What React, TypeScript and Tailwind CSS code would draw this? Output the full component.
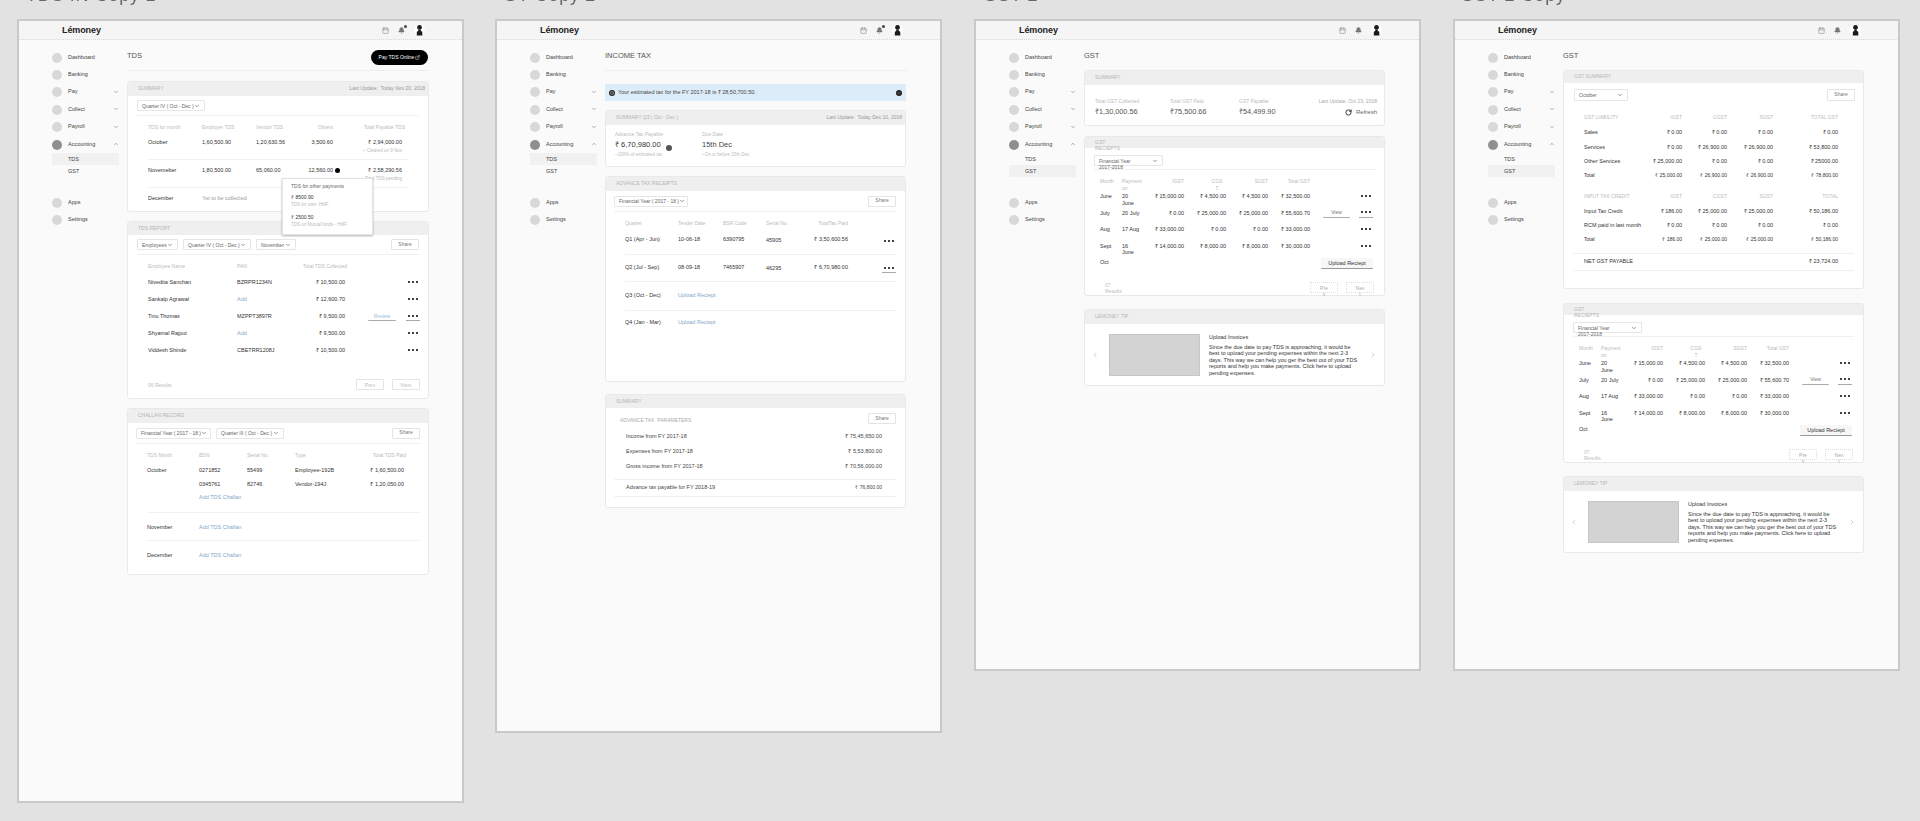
import type { ReactNode } from 'react';
import { Calendar, Bell, ChevronDown, ChevronUp, ChevronLeft, ChevronRight, ExternalLink, RotateCw, Check, Info } from 'lucide-react';

const navItems = [
  { label: 'Dashboard' },
  { label: 'Banking' },
  { label: 'Pay', caret: 'down' },
  { label: 'Collect', caret: 'down' },
  { label: 'Payroll', caret: 'down' },
  { label: 'Accounting', caret: 'up', active: true },
];

function Avatar() {
  return (
    <svg width="11" height="12" viewBox="0 0 11 12">
      <circle cx="5.5" cy="6" r="5.5" fill="#fff" />
      <circle cx="5.5" cy="3.4" r="2.4" fill="#1a1a1a" />
      <path d="M4.4 5.5h2.2l.3 1.6 1.4.7v3.7H2.8V7.8l1.4-.7z" fill="#1a1a1a" />
    </svg>
  );
}

function Dots() {
  return (
    <span className="inline-flex items-center justify-center gap-[1.6px] w-[12px]">
      <span className="w-[2px] h-[2px] rounded-full bg-black" />
      <span className="w-[2px] h-[2px] rounded-full bg-black" />
      <span className="w-[2px] h-[2px] rounded-full bg-black" />
    </span>
  );
}

function Select({ label, className = '' }: { label: string; className?: string }) {
  return (
    <div className={`h-[11px] flex items-center justify-between px-[4px] bg-white border border-[#e6e6e6] rounded-[1px] text-[5px] leading-[6px] text-[#666] whitespace-nowrap ${className}`}>
      <span>{label}</span>
      <ChevronDown size={6} strokeWidth={2} className="text-[#333] shrink-0" />
    </div>
  );
}

function SmallButton({ label, className = '' }: { label: string; className?: string }) {
  return (
    <div className={`h-[11px] w-[28px] flex items-center justify-center bg-white border border-[#e4e4e4] rounded-[1px] text-[5px] text-[#777] ${className}`}>
      {label}
    </div>
  );
}

// pager buttons of the GST table: the label is too wide for its slot and wraps out of the box
function PagerButton({ label, className = '' }: { label: string; className?: string }) {
  return (
    <div className={`h-[11px] w-[28px] flex justify-center pt-[2px] bg-white border border-dotted border-[#dddddd] rounded-[1px] text-[5px] leading-[6.5px] text-[#aaa] ${className}`}>
      <span className="w-[9px] break-all text-center">{label}</span>
    </div>
  );
}

function Card({ title, right, titleClass = '', headerClass = 'h-[14px]', className = '', children }: {
  title: ReactNode;
  right?: ReactNode;
  titleClass?: string;
  headerClass?: string;
  className?: string;
  children: ReactNode;
}) {
  return (
    <section className={`relative bg-white border border-[#e9e9e9] rounded-[3px] ${className}`}>
      <div className={`flex items-center justify-between bg-[#efefef] pl-[10px] pr-[3px] rounded-t-[3px] text-[5px] leading-[5.5px] text-[#b5b5b5] ${headerClass}`}>
        <span className={titleClass}>{title}</span>
        {right}
      </div>
      {children}
    </section>
  );
}

function Shell({ className, children, gstActive = false }: { className: string; children: ReactNode; gstActive?: boolean }) {
  return (
    <div className={`absolute top-[19px] w-[447px] border-2 border-[#c9c9c9] bg-[#fafafa] ${className}`}>
      <header className="h-[19px] flex items-center justify-between bg-[#f5f5f5] border-b border-dotted border-[#d9d9d9] pl-[43px] pr-[37px]">
        <span className="mt-[1px] text-[9px] font-bold tracking-[-0.1px] text-[#222]">Lémoney</span>
        <div className="flex items-center gap-[9px] text-[#8a8a8a]">
          <Calendar size={7} />
          <span className="relative flex">
            <Bell size={7} fill="currentColor" className="text-[#777]" />
            {!gstActive && <span className="absolute -top-[2px] -right-[2px] w-[3px] h-[3px] rounded-full bg-[#444]" />}
          </span>
          <Avatar />
        </div>
      </header>
      <div className="flex">
        <aside className="w-[108px] shrink-0 pt-[8.5px] pl-[33px] pr-[8px] text-[5.5px] text-[#444]">
          {navItems.map((n) => (
            <div key={n.label} className="h-[17.4px] flex items-center">
              <span className={`w-[10px] h-[10px] shrink-0 rounded-full mr-[6px] mt-[1px] ${n.active ? 'bg-[#8f8f8f]' : 'bg-[#d8d8d8]'}`} />
              <span className="flex-1 mb-[1px]">{n.label}</span>
              {n.caret === 'down' && <ChevronDown size={6} className="text-[#666]" />}
              {n.caret === 'up' && <ChevronUp size={6} className="text-[#666]" />}
            </div>
          ))}
          <div className={`h-[12px] flex items-center pl-[16px] ${gstActive ? '' : 'bg-[#f1f1f1]'}`}>TDS</div>
          <div className={`h-[12px] flex items-center pl-[16px] ${gstActive ? 'bg-[#f1f1f1]' : ''}`}>GST</div>
          <div className="h-[17.4px] flex items-center mt-[16.6px]">
            <span className="w-[10px] h-[10px] shrink-0 rounded-full bg-[#d8d8d8] mr-[6px] mt-[1px]" />
            <span>Apps</span>
          </div>
          <div className="h-[17.4px] flex items-center">
            <span className="w-[10px] h-[10px] shrink-0 rounded-full bg-[#d8d8d8] mr-[6px] mt-[1px]" />
            <span>Settings</span>
          </div>
        </aside>
        <main className="w-[302px] shrink-0">{children}</main>
      </div>
    </div>
  );
}

function TdsBoard() {
  const report = [
    { name: 'Nivedita Sanchan', pan: 'BZRPR1234N', amt: '₹ 10,500.00' },
    { name: 'Sankalp Agrawal', pan: 'Add', amt: '₹ 12,600.70' },
    { name: 'Tinu Thomas', pan: 'MZPPT3897R', amt: '₹ 9,500.00', review: true },
    { name: 'Shyamal Rajput', pan: 'Add', amt: '₹ 9,500.00' },
    { name: 'Viddesh Shinde', pan: 'CBETRR1208J', amt: '₹ 10,500.00' },
  ];
  return (
    <Shell className="left-[17px] h-[784px]">
      <div className="h-[31px] flex items-start justify-between border-b border-[#eeeeee] pt-[10px]">
        <h1 className="text-[7.5px] leading-[12px] text-[#555]">TDS</h1>
        <button className="h-[15px] w-[57px] mr-[1px] flex items-center justify-center gap-[1px] rounded-full bg-black text-white text-[5px]">
          Pay TDS Online <ExternalLink size={5} />
        </button>
      </div>

      <Card
        className="mt-[10px] h-[131px] z-10"
        title="SUMMARY"
        right={<span className="text-[5px] text-[#999]">Last Update:&nbsp; Today Nov 20, 2018</span>}
      >
        <div className="h-[20px] mx-[9px] flex items-center border-b border-[#f0f0f0]">
          <Select label="Quarter IV ( Oct - Dec )" className="w-[68px]" />
        </div>
        <div className="px-[20px] text-[5.5px] leading-[8px] text-[#333]">
          <div className="h-[22px] pt-[7px] grid grid-cols-[54px_54px_40px_37px_72px] text-[5px] text-[#bbb] whitespace-nowrap">
            <span>TDS for month</span>
            <span>Employer TDS</span>
            <span>Vendor TDS</span>
            <span className="text-right">Others</span>
            <span className="text-right">Total Payable TDS</span>
          </div>
          <div className="h-[22px] grid grid-cols-[54px_54px_40px_37px_72px] border-b border-[#f2f2f2] whitespace-nowrap">
            <span>October</span>
            <span>1,60,500.90</span>
            <span>1,20,630.56</span>
            <span className="text-right">3,500.60</span>
            <span className="text-right pr-[3px]">₹ 2,94,000.00<br /><span className="text-[4.5px] text-[#bbb]">~ Cleared on 9 Nov</span></span>
          </div>
          <div className="h-[28px] pt-[6px] grid grid-cols-[54px_54px_40px_37px_72px] border-b border-[#f2f2f2] whitespace-nowrap">
            <span>Novemeber</span>
            <span>1,80,500.00</span>
            <span>65,060.00</span>
            <span className="text-right">12,560.00</span>
            <span className="text-right pr-[3px]">₹ 2,58,290.56<br /><span className="text-[4.5px] text-[#bbb]">Total TDS pending</span></span>
          </div>
          <div className="pt-[6px] grid grid-cols-[54px_1fr]">
            <span>December</span>
            <span className="text-[#999]">Yet to be collected</span>
          </div>
        </div>
        <span className="absolute left-[207px] top-[86px] w-[5px] h-[5px] rounded-full bg-black" />
        <div className="absolute left-[154px] top-[96px] w-[91px] h-[57px] bg-white border border-[#e4e4e4] shadow-[0_1px_2px_rgba(0,0,0,0.3)] pl-[8px] pt-[3px] text-[5px] leading-[8px] text-[#666]">
          <div>TDS for other payments</div>
          <div className="mt-[3px] text-[#333]">₹ 8500.90</div>
          <div className="text-[4.5px] text-[#bbb]">TDS for own- HMF</div>
          <div className="mt-[4px] text-[#333]">₹ 2500.50</div>
          <div className="text-[4.5px] text-[#bbb]">TDS on Mutual funds - HMF</div>
        </div>
      </Card>

      <Card className="mt-[9px] h-[178px]" title="TDS REPORT" headerClass="h-[13px]">
        <div className="h-[20px] mx-[9px] flex items-center gap-[5px] border-b border-[#f0f0f0]">
          <Select label="Employees" className="w-[41px]" />
          <Select label="Quarter IV ( Oct - Dec )" className="w-[68px]" />
          <Select label="November" className="w-[40px]" />
          <SmallButton label="Share" className="ml-auto" />
        </div>
        <div className="pl-[20px] pr-[8px] text-[5.5px] leading-[8px] text-[#333]">
          <div className="h-[18.5px] pt-[7px] grid grid-cols-[89px_66px_42px_1fr] text-[5px] text-[#bbb]">
            <span>Employee Name</span>
            <span>PAN</span>
            <span className="whitespace-nowrap text-right">Total TDS Collected</span>
          </div>
          {report.map((r) => (
            <div key={r.name} className="h-[17px] grid grid-cols-[89px_66px_42px_1fr] items-center">
              <span>{r.name}</span>
              <span className={r.pan === 'Add' ? 'text-[#84a9c9]' : ''}>{r.pan}</span>
              <span className="text-right whitespace-nowrap">{r.amt}</span>
              <span className="flex items-center justify-end">
                {r.review && (
                  <span className="mr-[10px] w-[28px] h-[10px] flex items-center justify-center bg-white border-b border-[#aaa] rounded-[1px] text-[5px] text-[#9dbbd4]">Review</span>
                )}
                <span className={`flex items-center justify-center w-[14px] h-[10px] ${r.review ? 'border-b border-[#aaa]' : ''}`}><Dots /></span>
              </span>
            </div>
          ))}
          <div className="mt-[20.5px] flex items-center text-[5px] text-[#bbb]">
            <span>06 Results</span>
            <SmallButton label="Prev" className="ml-auto mr-[8px] !text-[#bbb]" />
            <SmallButton label="Next" className="!text-[#bbb]" />
          </div>
        </div>
      </Card>

      <Card className="mt-[9px] h-[167px]" title="CHALLAN RECORD">
        <div className="h-[21px] ml-[8px] mr-[8px] flex items-center gap-[5px] border-b border-[#f0f0f0]">
          <Select label="Financial Year ( 2017 - 18 )" className="w-[75px]" />
          <Select label="Quarter III ( Oct - Dec )" className="w-[68px]" />
          <SmallButton label="Share" className="ml-auto" />
        </div>
        <div className="pl-[19px] pr-[8px] text-[5.5px] leading-[8px] text-[#333]">
          <div className="h-[16px] pt-[7px] grid grid-cols-[52px_48px_48px_1fr_auto] pr-[14px] text-[5px] text-[#bbb]">
            <span>TDS Month</span>
            <span>BSN</span>
            <span>Serial No.</span>
            <span>Type</span>
            <span>Total TDS Paid</span>
          </div>
          <div className="h-[53px] pt-[6px] border-b border-[#f2f2f2]">
            <div className="h-[14px] grid grid-cols-[52px_48px_48px_1fr_auto] pr-[16px]">
              <span>October</span>
              <span>0271852</span>
              <span>55499</span>
              <span>Employee-192B</span>
              <span>₹ 1,60,500.00</span>
            </div>
            <div className="h-[13px] grid grid-cols-[52px_48px_48px_1fr_auto] pr-[16px]">
              <span />
              <span>0345761</span>
              <span>82746</span>
              <span>Vendor-194J</span>
              <span>₹ 1,20,050.00</span>
            </div>
            <div className="pl-[52px] text-[#84a9c9]">Add TDS Challan</div>
          </div>
          <div className="h-[28px] grid grid-cols-[52px_1fr] items-center border-b border-[#f2f2f2]">
            <span>November</span>
            <span className="text-[#84a9c9]">Add TDS Challan</span>
          </div>
          <div className="h-[28px] grid grid-cols-[52px_1fr] items-center">
            <span>December</span>
            <span className="text-[#84a9c9]">Add TDS Challan</span>
          </div>
        </div>
      </Card>
    </Shell>
  );
}

function IncomeTaxBoard() {
  const quarters = [
    { q: 'Q1 (Apr - Jun)', date: '10-06-18', bsr: '6390795', serial: '45905', paid: '₹ 3,50,600.56', rowH: 'h-[24px] pt-[4px]' },
    { q: 'Q2 (Jul - Sep)', date: '08-09-18', bsr: '7465907', serial: '46295', paid: '₹ 6,70,980.00', rowH: 'h-[27px] pt-[8px]', active: true },
  ];
  const params = [
    { label: 'Income from FY 2017-18', value: '₹ 75,45,650.00' },
    { label: 'Expenses from FY 2017-18', value: '₹ 5,53,800.00' },
    { label: 'Gross income from FY 2017-18', value: '₹ 70,56,000.00' },
  ];
  return (
    <Shell className="left-[495px] h-[714px]">
      <div className="h-[31px] border-b border-[#eeeeee] pt-[10px]">
        <h1 className="text-[7.5px] leading-[12px] text-[#555]">INCOME TAX</h1>
      </div>
      <div className="mt-[13px] h-[17px] w-[301px] flex items-center bg-[#dcecf8] pl-[4px] pr-[4px] text-[5.5px] text-[#444]">
        <span className="w-[6px] h-[6px] mr-[3px] mt-[1px] rounded-full bg-[#222] flex items-center justify-center text-white"><Info size={4} /></span>
        <span className="flex-1 mb-[1px]">Your estimated tax for the FY 2017-18 is ₹ 28,50,700.50.</span>
        <span className="w-[6px] h-[6px] rounded-full bg-[#222] flex items-center justify-center text-white"><Check size={4} /></span>
      </div>

      <Card
        className="mt-[9px] h-[57px] w-[301px]"
        title="SUMMARY Q3 ( Oct - Dec )"
        right={<span className="text-[#999]">Last Update:&nbsp; Today Dec 10, 2018</span>}
      >
        <div className="relative flex pl-[9px] pt-[5px]">
          <div className="w-[87px] leading-[8px]">
            <div className="text-[5px] text-[#bbb]">Advance Tax Payable</div>
            <div className="mt-[1px] text-[7.5px] leading-[12px] text-[#333]">₹ 6,70,980.00</div>
            <div className="text-[4.5px] text-[#bbb]">~100% of estimated tax</div>
          </div>
          <div className="leading-[8px]">
            <div className="text-[5px] text-[#bbb]">Due Date</div>
            <div className="mt-[1px] text-[7.5px] leading-[12px] text-[#444]">15th Dec</div>
            <div className="text-[4.5px] text-[#bbb]">~On or before 15th Dec</div>
          </div>
          <span className="absolute left-[60px] top-[20px] w-[6px] h-[6px] rounded-full bg-[#555]" />
        </div>
      </Card>

      <Card className="mt-[9px] h-[206px] w-[301px]" title="ADVANCE TAX RECEIPTS">
        <div className="h-[21px] mx-[8px] flex items-center border-b border-[#f0f0f0]">
          <Select label="Financial Year ( 2017 - 18 )" className="w-[74px]" />
          <SmallButton label="Share" className="ml-auto mr-[1px]" />
        </div>
        <div className="pl-[19px] pr-[9px] text-[5.5px] leading-[8px] text-[#333]">
          <div className="h-[19px] pt-[7px] grid grid-cols-[53px_45px_43px_82px] text-[5px] text-[#bbb]">
            <span>Quarter</span>
            <span>Tender Date</span>
            <span>BSR Code</span>
            <span className="flex justify-between"><span>Serial No.</span><span>TotalTax Paid</span></span>
          </div>
          {quarters.map((r) => (
            <div key={r.q} className={`${r.rowH} grid grid-cols-[53px_45px_43px_82px_1fr] border-b border-[#f2f2f2]`}>
              <span>{r.q}</span>
              <span>{r.date}</span>
              <span>{r.bsr}</span>
              <span className="flex justify-between"><span className="mt-[1px]">{r.serial}</span><span>{r.paid}</span></span>
              <span className="flex justify-end items-start">
                <span className={`mt-[1px] w-[14px] h-[9px] flex items-center justify-center ${r.active ? 'bg-white border-b border-[#aaa]' : ''}`}><Dots /></span>
              </span>
            </div>
          ))}
          <div className="h-[29px] pt-[9px] grid grid-cols-[53px_1fr] border-b border-[#f2f2f2]">
            <span>Q3 (Oct - Dec)</span>
            <span className="text-[#84a9c9]">Upload Reciept</span>
          </div>
          <div className="pt-[7px] grid grid-cols-[53px_1fr]">
            <span>Q4 (Jan - Mar)</span>
            <span className="text-[#84a9c9]">Upload Reciept</span>
          </div>
        </div>
      </Card>

      <Card className="mt-[12px] h-[114px] w-[301px]" title="SUMMARY" headerClass="h-[13px]">
        <div className="mx-[8px] pt-[5px]">
          <div className="h-[11px] flex items-center pl-[6px] pr-[1px] text-[5px] text-[#aaa]">
            <span className="mt-[4px]">ADVANCE TAX&nbsp; PARAMETERS</span>
            <SmallButton label="Share" className="ml-auto" />
          </div>
          <div className="pt-[5px] pl-[12px] pr-[15px] text-[5.5px] text-[#444]">
            {params.map((p) => (
              <div key={p.label} className="h-[15px] flex items-center justify-between">
                <span>{p.label}</span>
                <span>{p.value}</span>
              </div>
            ))}
          </div>
          <div className="mt-[4.5px] h-[18px] flex items-center justify-between pl-[12px] pr-[15px] border-y border-[#f0f0f0] text-[5.5px] text-[#444]">
            <span>Advance tax payable for FY 2018-19</span>
            <span className="text-[5px]">₹ 76,800.00</span>
          </div>
        </div>
      </Card>
    </Shell>
  );
}

function GstReceiptsCard({ className }: { className: string }) {
  const rows = [
    { m: 'June', on: '20 June', igst: '₹ 15,000.00', cgst: '₹ 4,500.00', sgst: '₹ 4,500.00', total: '₹ 32,500.00' },
    { m: 'July', on: '20 July', igst: '₹ 0.00', cgst: '₹ 25,000.00', sgst: '₹ 25,000.00', total: '₹ 55,600.70', view: true },
    { m: 'Aug', on: '17 Aug', igst: '₹ 33,000.00', cgst: '₹ 0.00', sgst: '₹ 0.00', total: '₹ 33,000.00' },
    { m: 'Sept', on: '16 June', igst: '₹ 14,000.00', cgst: '₹ 8,000.00', sgst: '₹ 8,000.00', total: '₹ 30,000.00' },
  ];
  return (
    <Card className={`h-[160px] w-[301px] ${className}`} title={<>GST<br />RECIEPTS</>} headerClass="h-[11px] items-start pt-[3px]">
      <div className="h-[22px] mx-[9px] pt-[7px] border-b border-[#f0f0f0]">
        <div className="h-[11px] w-[69px] flex justify-between px-[4px] pt-[2px] bg-white border border-[#e6e6e6] rounded-[1px] text-[5px] leading-[6px] text-[#666]">
          <span>Financial Year<br />2017-2018</span>
          <ChevronDown size={6} className="text-[#333] shrink-0" />
        </div>
      </div>
      <div className="pl-[15px] pr-[11px] text-[5.5px] leading-[6.5px] text-[#333]">
        <div className="h-[23px] pt-[8px] grid grid-cols-[22px_22px_40px_42px_42px_42px] text-[5px] text-[#bbb]">
          <span>Month</span>
          <span className="w-[20px]">Payment on</span>
          <span className="text-right">IGST</span>
          <span className="text-right pr-[3px]"><span className="inline-block w-[12px] break-all text-center">CGST</span></span>
          <span className="text-right">SGST</span>
          <span className="text-right">Total GST</span>
        </div>
        {rows.map((r) => (
          <div key={r.m} className="h-[16.5px] grid grid-cols-[22px_22px_40px_42px_42px_42px_1fr]">
            <span>{r.m}</span>
            <span className="w-[18px]">{r.on}</span>
            <span className="text-right whitespace-nowrap">{r.igst}</span>
            <span className="text-right whitespace-nowrap">{r.cgst}</span>
            <span className="text-right whitespace-nowrap">{r.sgst}</span>
            <span className="text-right whitespace-nowrap">{r.total}</span>
            <span className="flex items-start justify-end">
              {r.view && (
                <span className="mr-[9px] -mt-[2px] w-[27px] h-[10px] flex items-center justify-center bg-white border-b border-[#aaa] rounded-[1px] text-[5px] text-[#777]">View</span>
              )}
              <span className={`flex items-center justify-center w-[14px] ${r.view ? '-mt-[2px] h-[10px] border-b border-[#aaa]' : 'h-[6.5px]'}`}><Dots /></span>
            </span>
          </div>
        ))}
        <div className="h-[16.5px] flex">
          <span>Oct</span>
          <span className="ml-auto -mt-[1px] w-[52px] h-[11px] flex items-center justify-center bg-[#f7f7f7] border-b border-[#999] rounded-[1px] text-[5.5px] text-[#333]">Upload Reciept</span>
        </div>
      </div>
      <div className="mt-[6px] flex items-start pl-[20px] pr-[10px] text-[5px] leading-[6.5px] text-[#bbb]">
        <span className="w-[20px]">07 Results</span>
        <PagerButton label="Prev" className="ml-auto mr-[8px]" />
        <PagerButton label="Next" />
      </div>
    </Card>
  );
}

function TipCard({ className }: { className: string }) {
  return (
    <Card className={`h-[77px] w-[301px] ${className}`} title="LEMONEY TIP">
      <div className="h-[62px] flex items-center pl-[6px] pr-[7px] text-[#bdbdbd]">
        <ChevronLeft size={8} className="shrink-0" />
        <div className="ml-[10px] w-[91px] h-[42px] shrink-0 bg-[#d3d3d3] border border-[#c6c6c6]" />
        <div className="ml-[9px] flex-1 text-[5.5px] leading-[6.5px] text-[#333]">
          <div className="mb-[3px]">Upload Invoices</div>
          Since the due date to pay TDS is approaching, it would be best to upload your pending expenses within the next 2-3 days. This way we can help you ger the best out of your TDS reports and help you make payments. Click here to upload pending expenses.
        </div>
        <ChevronRight size={8} className="ml-[7px] shrink-0" />
      </div>
    </Card>
  );
}

function GstBoard() {
  const stats = [
    { label: 'Total GST Collected', value: '₹1,30,000.56', w: 'w-[75px]' },
    { label: 'Total GST Paid', value: '₹75,500.66', w: 'w-[69px]' },
    { label: 'GST Payable', value: '₹54,499.90', w: 'w-[70px]' },
  ];
  return (
    <Shell className="left-[974px] h-[652px]" gstActive>
      <div className="h-[30px] pt-[10px]">
        <h1 className="text-[7.5px] leading-[12px] text-[#555]">GST</h1>
      </div>
      <Card className="h-[56px] w-[301px]" title="SUMMARY">
        <div className="flex items-start pl-[10px] pr-[7px] pt-[12px]">
          {stats.map((s) => (
            <div key={s.label} className={s.w}>
              <div className="text-[5px] leading-[8px] text-[#bbb]">{s.label}</div>
              <div className="text-[7.3px] leading-[14px] text-[#555]">{s.value}</div>
            </div>
          ))}
          <div className="ml-auto text-right">
            <div className="text-[5px] leading-[8px] text-[#aaa] whitespace-nowrap">Last Update: Oct 23, 2018</div>
            <div className="flex items-center justify-end gap-[4px] text-[6px] leading-[14px] text-[#666]">
              <RotateCw size={7} strokeWidth={3} className="text-[#222]" />
              Refresh
            </div>
          </div>
        </div>
      </Card>
      <GstReceiptsCard className="mt-[10px]" />
      <TipCard className="mt-[13px]" />
    </Shell>
  );
}

function GstSummaryBoard() {
  const liability = [
    ['Sales', '₹ 0.00', '₹ 0.00', '₹ 0.00', '₹ 0.00'],
    ['Services', '₹ 0.00', '₹ 26,900.00', '₹ 26,900.00', '₹ 53,800.00'],
    ['Other Services', '₹ 25,000.00', '₹ 0.00', '₹ 0.00', '₹ 25000.00'],
    ['Total', '₹ 25,000.00', '₹ 26,900.00', '₹ 26,900.00', '₹ 78,800.00'],
  ];
  const credit = [
    ['Input Tax Credit', '₹ 186.00', '₹ 25,000.00', '₹ 25,000.00', '₹ 50,186.00'],
    ['RCM paid in last month', '₹ 0.00', '₹ 0.00', '₹ 0.00', '₹ 0.00'],
    ['Total', '₹ 186.00', '₹ 25,000.00', '₹ 25,000.00', '₹ 50,186.00'],
  ];
  const renderRows = (rows: string[][]) =>
    rows.map((r) => (
      <div key={r[0]} className={`h-[14.5px] grid grid-cols-[60px_38px_45px_46px_65px] items-center ${r[0] === 'Total' ? 'text-[5px]' : ''}`}>
        {r.map((c, i) => (
          <span key={i} className={i === 0 ? 'whitespace-nowrap' : 'text-right whitespace-nowrap'}>{c}</span>
        ))}
      </div>
    ));
  return (
    <Shell className="left-[1453px] h-[652px]" gstActive>
      <div className="h-[30px] pt-[10px]">
        <h1 className="text-[7.5px] leading-[12px] text-[#555]">GST</h1>
      </div>
      <Card className="h-[219px] w-[301px]" title="GST SUMMARY" headerClass="h-[12px]">
        <div className="h-[24px] flex items-center justify-between pl-[10px] pr-[8px]">
          <Select label="October" className="w-[54px] !h-[12px]" />
          <SmallButton label="Share" className="!h-[12px]" />
        </div>
        <div className="pl-[20px] text-[5.5px] text-[#333]">
          <div className="mt-[4px] h-[14px] grid grid-cols-[60px_38px_45px_46px_65px] items-center text-[5px] text-[#bbb] whitespace-nowrap">
            <span>GST LIABILITY</span>
            <span className="text-right">IGST</span>
            <span className="text-right">CGST</span>
            <span className="text-right">SGST</span>
            <span className="text-right">TOTAL GST</span>
          </div>
          {renderRows(liability)}
          <div className="mt-[6.5px] h-[14px] grid grid-cols-[60px_38px_45px_46px_65px] items-center text-[5px] text-[#bbb] whitespace-nowrap">
            <span>INPUT TAX CREDIT</span>
            <span className="text-right">IGST</span>
            <span className="text-right">CGST</span>
            <span className="text-right">SGST</span>
            <span className="text-right">TOTAL</span>
          </div>
          {renderRows(credit)}
        </div>
        <div className="mt-[5.5px] ml-[9px] mr-[9px] h-[18px] flex items-center justify-between pl-[11px] pr-[16px] border-y border-[#f0f0f0] text-[5.5px] text-[#333]">
          <span>NET GST PAYABLE</span>
          <span>₹ 23,724.00</span>
        </div>
      </Card>
      <GstReceiptsCard className="mt-[14px]" />
      <TipCard className="mt-[13px]" />
    </Shell>
  );
}

export default function App() {
  return (
    <div className="relative w-[1920px] h-[821px] overflow-hidden bg-[#e2e2e2] font-['Liberation_Sans',Arial,sans-serif]">
      <div className="blur-[0.3px]">
        <span className="absolute left-[26px] -top-[18px] text-[18px] tracking-[0.7px] text-[#666] whitespace-nowrap">TDS IN Copy 1</span>
        <span className="absolute left-[503px] -top-[18px] text-[18px] tracking-[0.7px] text-[#666] whitespace-nowrap">GT Copy 2</span>
        <span className="absolute left-[983px] -top-[18px] text-[18px] tracking-[0.7px] text-[#666] whitespace-nowrap">GST 2</span>
        <span className="absolute left-[1460px] -top-[18px] text-[18px] tracking-[0.7px] text-[#666] whitespace-nowrap">GST 2 Copy</span>
        <TdsBoard />
        <IncomeTaxBoard />
        <GstBoard />
        <GstSummaryBoard />
      </div>
    </div>
  );
}
